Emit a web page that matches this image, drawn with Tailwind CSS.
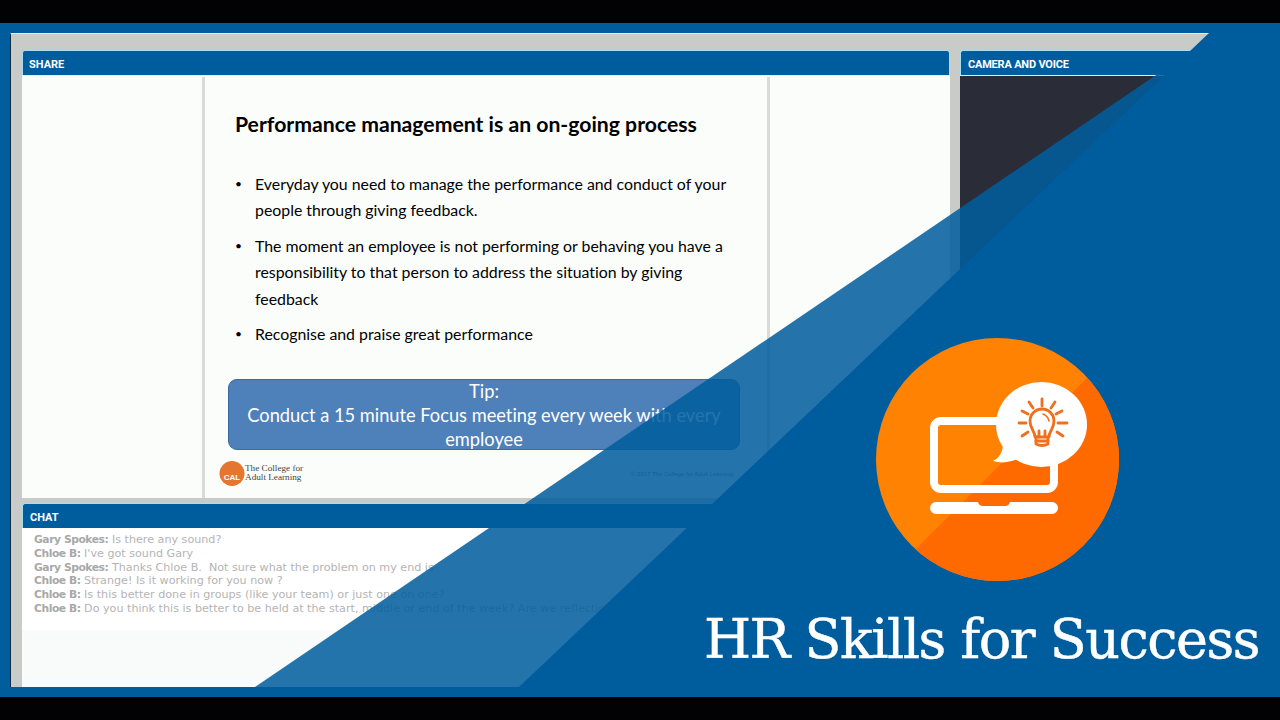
<!DOCTYPE html>
<html>
<head>
<meta charset="utf-8">
<script src="https://cdn.jsdelivr.net/npm/@tailwindcss/browser@4"></script>
</head>
<body>
<div class="relative w-[1280px] h-[720px] overflow-hidden bg-black flex flex-col">
  <div class="h-[23px] shrink-0 bg-[#020204]"></div>
  <main class="h-[674px] shrink-0 bg-[#005d9d] pl-[10px] pt-[10px]">
    <div class="w-[1200px] h-[654px] bg-[#c9cbc9] border-l border-l-[#0b2a44] border-t border-t-[#d9f2f8] pl-[11px] pt-[16px] flex flex-col gap-[5px]">
      <div class="flex gap-[10px] h-[448px]">
        <section class="w-[928px] flex flex-col">
          <header class="h-[25px] shrink-0 bg-[#005d9d] rounded-t-[3px] border-t border-x border-[#a9dcee] pl-[6px] pt-[5px] flex items-center text-white text-[11px] font-bold [font-family:Roboto,sans-serif]">SHARE</header>
          <div class="flex-1 bg-[#fbfdfb] border-t border-t-[#d9f2f8] flex justify-center pt-px">
            <article class="w-[568px] border-x-[3px] border-[#d9dbd9] pl-[30px] [font-family:Lato,sans-serif] [font-variant-ligatures:none] text-black flex flex-col">
              <h1 class="mt-[34px] h-[26px] text-[21.200px] leading-[26px] font-bold whitespace-nowrap">Performance management is an on-going process</h1>
              <ul class="mt-[34px] w-[495px] text-[15.870px] leading-[26.300px] flex flex-col gap-[9.400px]">
                <li class="flex"><span class="w-[20px] shrink-0 text-[12px]">•</span><span>Everyday you need to manage the performance and conduct of your people through giving feedback.</span></li>
                <li class="flex"><span class="w-[20px] shrink-0 text-[12px]">•</span><span>The moment an employee is not performing or behaving you have a responsibility to that person to address the situation by giving feedback</span></li>
                <li class="flex"><span class="w-[20px] shrink-0 text-[12px]">•</span><span>Recognise and praise great performance</span></li>
              </ul>
              <div class="mt-[31px] ml-[-7px] w-[512px] h-[71px] rounded-[9px] bg-[#4e80ba] border border-[#38699f] text-white text-[18.250px] leading-[24px] text-center whitespace-nowrap"><div class="mt-[-1px]">Tip:<br>Conduct a 15 minute Focus meeting every week with every<br>employee</div></div>
              <div class="mt-[10px] ml-[-16px] w-[514px] flex items-center justify-between">
                <div class="flex items-center gap-0">
                  <svg width="26" height="27" viewBox="0 0 26 27"><circle cx="13" cy="13.500" r="12.500" fill="#e5762f"/><text x="13" y="20" text-anchor="middle" font-size="8" font-weight="700" fill="#fff" font-family="Liberation Sans">CAL</text></svg>
                  <div class="[font-family:'Liberation_Serif',serif] text-[9.200px] leading-[9px] text-[#444]">The College for<br>Adult Learning</div>
                </div>
                <div class="text-[6px] text-[#777] [font-family:'Liberation_Sans',sans-serif] mt-[2px]">© 2017 The College for Adult Learning</div>
              </div>
            </article>
          </div>
        </section>
        <section class="flex-1 flex flex-col">
          <header class="h-[25px] shrink-0 bg-[#005d9d] rounded-tl-[3px] border-t border-l border-[#a9dcee] pl-[7px] pt-[5px] flex items-center text-white text-[11px] tracking-[-0.2px] font-bold [font-family:Roboto,sans-serif]">CAMERA AND VOICE</header>
          <div class="flex-1 bg-[#2a2d38] border-t border-t-[#d9f2f8]"></div>
        </section>
      </div>
      <section class="flex-1 flex flex-col">
        <header class="h-[25px] shrink-0 bg-[#005d9d] rounded-tl-[3px] border-t border-l border-[#a9dcee] pl-[7px] pt-[5px] flex items-center text-white text-[11px] font-bold [font-family:Roboto,sans-serif]">CHAT</header>
        <div class="flex-1 bg-[#f8fbf9]">
          <div class="h-[102px] bg-white pl-[12px] pt-[5px] text-[11.150px] leading-[13.800px] text-[#b4b4b4] [font-family:'DejaVu_Sans',sans-serif] whitespace-nowrap">
            <div><b class="text-[10.750px] tracking-[-0.45px] text-[#a8a8a8]">Gary Spokes:</b> Is there any sound?</div>
            <div><b class="text-[10.750px] tracking-[-0.45px] text-[#a8a8a8]">Chloe B:</b> I've got sound Gary</div>
            <div><b class="text-[10.750px] tracking-[-0.45px] text-[#a8a8a8]">Gary Spokes:</b> Thanks Chloe B.&nbsp; Not sure what the problem on my end is</div>
            <div><b class="text-[10.750px] tracking-[-0.45px] text-[#a8a8a8]">Chloe B:</b> Strange! Is it working for you now ?</div>
            <div><b class="text-[10.750px] tracking-[-0.45px] text-[#a8a8a8]">Chloe B:</b> Is this better done in groups (like your team) or just one on one?</div>
            <div><b class="text-[10.750px] tracking-[-0.45px] text-[#a8a8a8]">Chloe B:</b> Do you think this is better to be held at the start, middle or end of the week? Are we reflecting</div>
          </div>
        </div>
      </section>
    </div>
  </main>
  <div class="flex-1 bg-[#020204]"></div>

  <svg class="absolute left-0 top-0" width="1280" height="720" viewBox="0 0 1280 720">
    <polygon points="1190,52 255,687 530,687 1200,52" fill="#005d9d" fill-opacity="0.86"/>
    <polygon points="1209,33 1280,33 1280,687 519,687" fill="#005d9d"/>
  </svg>

  <svg class="absolute left-[870px] top-[332px]" width="256" height="256" viewBox="870 332 256 256">
    <defs><clipPath id="disc"><circle cx="997.500" cy="459.500" r="121.500"/></clipPath></defs>
    <circle cx="997.500" cy="459.500" r="121.500" fill="#ff8203"/>
    <polygon clip-path="url(#disc)" points="1090,375 1130,375 1130,590 905,590 905,560" fill="#ff6a00"/>
    <rect x="934" y="421" width="120" height="68" rx="7" fill="none" stroke="#fff" stroke-width="8"/>
    <path d="M936 502 H978 Q979 506 983 506 H1005 Q1009 506 1010 502 H1052 a6 6 0 0 1 0 12 H936 a6 6 0 0 1 0 -12 Z" fill="#fff"/>
    <ellipse cx="1041.500" cy="424.500" rx="45.500" ry="42.500" fill="#fff"/>
    <path d="M1003 446 C1002 453 999 458 993 461 C1003 464 1014 462 1022 456 Z" fill="#fff"/>
    <g fill="none" stroke="#ee6f1e" stroke-width="2.800" stroke-linecap="round" stroke-linejoin="round">
      <path d="M1035 437 C1035 431 1030 429 1030 421 A12 12 0 0 1 1054 421 C1054 429 1049 431 1049 437 Z"/>
      <path d="M1039 437 V431 M1045 437 V431"/>
      <path d="M1036 437 V444 Q1042 447 1048 444 V437"/>
      <path d="M1036 441 H1048"/>
      <path d="M1042 399 V406 M1029 402 L1033 408 M1055 402 L1051 408 M1022 411 L1028 414 M1062 411 L1056 414 M1019 423 H1026 M1058 423 H1067 M1022 436 L1028 432 M1063 436 L1057 432"/>
      <path d="M1043 414 Q1048 416 1049 421" stroke-width="1.600"/>
    </g>
  </svg>

  <div class="absolute left-[704px] top-[604px] text-white text-[54px] leading-[72px] tracking-[-1.500px] whitespace-nowrap [font-family:'DejaVu_Serif',serif] [-webkit-text-stroke:0.5px_white]">HR Skills for Success</div>
</div>
</body>
</html>
